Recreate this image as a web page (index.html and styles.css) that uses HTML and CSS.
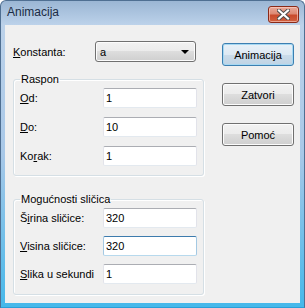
FILE: index.html
```html
<!DOCTYPE html>
<html lang="hr">
<head>
    <meta charset="UTF-8">
    <title>Animacija</title>
    <link rel="stylesheet" href="styles.css">
</head>
<body>
    <div class="window">
        <div class="titlebar">
            <span class="title">Animacija</span>
            <button class="close-btn" title="Zatvori">
                <svg width="13" height="11" viewBox="0 0 13 11">
                    <path d="M2 1.5 L11 9.5 M11 1.5 L2 9.5" stroke="#4a4a4a" stroke-width="4" stroke-linecap="square"/>
                    <path d="M2 1.5 L11 9.5 M11 1.5 L2 9.5" stroke="#ffffff" stroke-width="2.2" stroke-linecap="square"/>
                </svg>
            </button>
        </div>

        <div class="client">
            <div class="left-col">
                <div class="row konst-row">
                    <label class="lbl konst-lbl"><span class="acc">K</span>onstanta:</label>
                    <div class="combo">
                        <span class="combo-val">a</span>
                        <span class="combo-arrow"></span>
                    </div>
                </div>

                <!-- Raspon -->
                <fieldset class="group">
                    <legend>Raspon</legend>
                    <div class="row">
                        <label class="lbl"><span class="acc">O</span>d:</label>
                        <input class="field" type="text" value="1">
                    </div>
                    <div class="row">
                        <label class="lbl"><span class="acc">D</span>o:</label>
                        <input class="field" type="text" value="10">
                    </div>
                    <div class="row">
                        <label class="lbl">Ko<span class="acc">r</span>ak:</label>
                        <input class="field" type="text" value="1">
                    </div>
                </fieldset>

                <!-- Mogucnosti slicica -->
                <fieldset class="group group-2">
                    <legend>Mogućnosti sličica</legend>
                    <div class="row">
                        <label class="lbl">Š<span class="acc">i</span>rina sličice:</label>
                        <input class="field" type="text" value="320">
                    </div>
                    <div class="row">
                        <label class="lbl"><span class="acc">V</span>isina sličice:</label>
                        <input class="field focused" type="text" value="320">
                    </div>
                    <div class="row">
                        <label class="lbl"><span class="acc">S</span>lika u sekundi</label>
                        <input class="field" type="text" value="1">
                    </div>
                </fieldset>
            </div>

            <div class="right-col">
                <button class="btn btn-default">Animacija</button>
                <button class="btn">Zatvori</button>
                <button class="btn">Pomoć</button>
            </div>
        </div>
    </div>
</body>
</html>
```

FILE: styles.css
```css
* {
    box-sizing: border-box;
}
body {
    margin: 0;
    font-family: 'Liberation Sans', Arial, sans-serif;
    font-size: 11px;
    color: #000;
    background: #fff;
}
.window {
    width: 305px;
    height: 308px;
    display: flex;
    flex-direction: column;
    padding: 0 4px 4px 4px;
    border: 1px solid #4f6f92;
    border-bottom-color: #2a9fd8;
    border-radius: 6px 6px 0 0;
    background: linear-gradient(to bottom, #9bb6d4 0, #bcd2ea 24px, #a8c8e8 50%, #45b8ea 100%);
}
.titlebar {
    height: 24px;
    display: flex;
    align-items: center;
    justify-content: space-between;
    padding: 0 1px 0 2px;
}
.title {
    font-size: 12px;
    color: #1b2c44;
    margin-top: -2px;
}
.close-btn {
    width: 31px;
    height: 17px;
    margin-top: 2px;
    padding: 0;
    border: 1px solid #8a2a18;
    border-radius: 3px;
    background: linear-gradient(to bottom, #e9a99a 0, #dd8a74 45%, #c94a2c 55%, #d0613f 100%);
    box-shadow: inset 0 0 0 1px rgba(255, 210, 200, 0.6);
    display: flex;
    align-items: center;
    justify-content: center;
}
.client {
    flex: 1;
    background: #f0f0f0;
    display: flex;
}
.left-col {
    width: 199px;
    padding-left: 8px;
}
.row {
    display: flex;
    align-items: center;
    height: 20px;
}
.row + .row {
    margin-top: 9px;
}
.konst-row {
    height: 21px;
    margin-top: 16px;
}
.lbl {
    width: 83px;
    flex: none;
}
.konst-lbl {
    width: 82px;
    padding-left: 0;
}
.acc {
    text-decoration: underline;
    text-underline-offset: 1px;
}
.combo {
    width: 101px;
    height: 21px;
    border: 1px solid #707070;
    border-radius: 3px;
    background: linear-gradient(to bottom, #f2f2f2 0, #ebebeb 50%, #dddddd 50%, #cfcfcf 100%);
    box-shadow: inset 0 0 0 1px #fcfcfc;
    display: flex;
    align-items: center;
    justify-content: space-between;
    padding: 0 6px 0 4px;
}
.combo-arrow {
    width: 0;
    height: 0;
    border-left: 4px solid transparent;
    border-right: 4px solid transparent;
    border-top: 4px solid #000;
}
.group {
    margin: 10px 0 0 0;
    padding: 2px 6px 9px 6px;
    border: 1px solid #d5dfe5;
    border-radius: 3px;
    box-shadow: inset 1px 1px 0 #fff, 1px 1px 0 #fff;
}
.group-2 {
    margin-top: 16px;
    padding-bottom: 10px;
}
.group-2 .row + .row {
    margin-top: 8px;
}
.group legend {
    line-height: 14px;
    padding: 0 1px;
    margin-left: 0;
}
.field {
    width: 94px;
    height: 20px;
    margin: 0;
    padding: 0 2px;
    font-family: inherit;
    font-size: 11px;
    color: #000;
    background: #fff;
    border: 1px solid;
    border-color: #abadb3 #e2e3ea #e3e9ef #e2e3ea;
    border-radius: 2px;
    outline: none;
}
.field.focused {
    border-color: #3d7bad #a4c9e3 #b7d9ed #a4c9e3;
}
.right-col {
    padding-left: 18px;
    padding-top: 18px;
    display: flex;
    flex-direction: column;
    gap: 17px;
}
.btn {
    width: 72px;
    height: 23px;
    padding: 0;
    font-family: inherit;
    font-size: 11px;
    color: #000;
    border: 1px solid #707070;
    border-radius: 3px;
    background: linear-gradient(to bottom, #f2f2f2 0, #ebebeb 50%, #dddddd 50%, #cfcfcf 100%);
    box-shadow: inset 0 0 0 1px #fcfcfc;
}
.btn-default {
    border-color: #3c7fb1;
    background: linear-gradient(to bottom, #e8f1f8 0, #dde9f3 50%, #cbdcea 50%, #bfd3e4 100%);
    box-shadow: inset 0 0 0 1px #a6d8f2;
}
```
